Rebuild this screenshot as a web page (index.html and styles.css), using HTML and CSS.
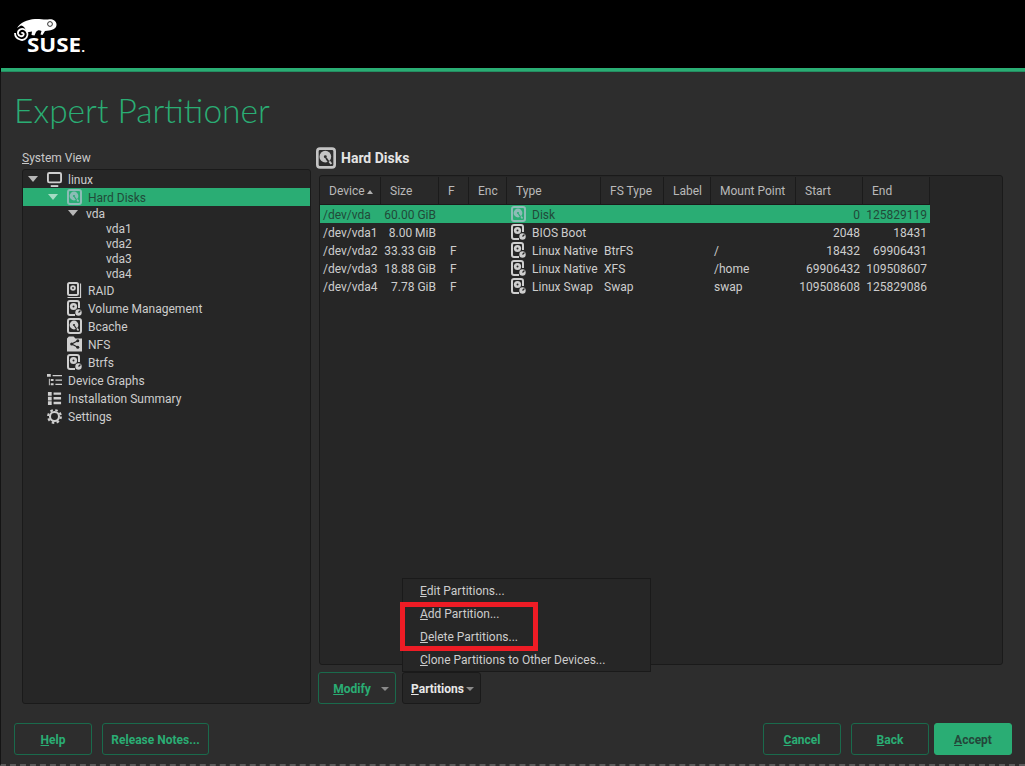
FILE: index.html
```html
<!DOCTYPE html>
<html lang="en">
<head>
    <meta charset="UTF-8">
    <meta name="viewport" content="width=device-width, initial-scale=1.0">
    <title>Expert Partitioner</title>
    <link rel="stylesheet" href="styles.css">
</head>
<body>
    <svg class="defs" width="0" height="0">
        <symbol id="i-monitor" viewBox="0 0 16 16">
            <rect x="1" y="1" width="14" height="10" rx="1.5" fill="none" stroke="currentColor" stroke-width="2"/>
            <rect x="4" y="14" width="8" height="2" fill="currentColor"/>
        </symbol>
        <symbol id="i-disk" viewBox="0 0 15 16">
            <rect x="1" y="1" width="13" height="14" rx="2" fill="none" stroke="currentColor" stroke-width="2"/>
            <circle cx="7" cy="7" r="4.400" fill="currentColor"/>
            <circle class="hole" cx="7" cy="7" r="1.100"/>
            <path class="cut" d="M7.500 8l3.500 5"/>
            <path d="M10 10.500l1.500 2" stroke="currentColor" stroke-width="1.500"/>
        </symbol>
        <symbol id="i-disk-sub" viewBox="0 0 15 16">
            <path d="M8 15H3a2 2 0 0 1-2-2V3a2 2 0 0 1 2-2h7a2 2 0 0 1 2 2v5" fill="none" stroke="currentColor" stroke-width="2"/>
            <circle cx="6.500" cy="6.500" r="3.600" fill="currentColor"/>
            <circle class="hole" cx="6.500" cy="6.500" r="1"/>
            <circle cx="11.500" cy="12.500" r="3.200" fill="currentColor"/>
            <path class="cut" d="M11.500 12.500l2-2"/>
        </symbol>
        <symbol id="i-raid" viewBox="0 0 15 16">
            <rect x="1" y="1" width="10" height="12" rx="1.500" fill="none" stroke="currentColor" stroke-width="2"/>
            <circle cx="6" cy="6" r="2.800" fill="currentColor"/>
            <circle class="hole" cx="6" cy="6" r=".9"/>
            <path d="M13.500 1.500v14h-13" fill="none" stroke="currentColor" stroke-width="1.200"/>
        </symbol>
        <symbol id="i-nfs" viewBox="0 0 16 16">
            <path d="M0 2L2 0h5l2 2h7v14H0z" fill="currentColor"/>
            <path class="cut" d="M11.500 4.500L5 8l6.500 3.500"/>
            <circle class="hole" cx="11.500" cy="4.500" r="1.600"/>
            <circle class="hole" cx="5" cy="8" r="1.600"/>
            <circle class="hole" cx="11.500" cy="11.500" r="1.600"/>
        </symbol>
        <symbol id="i-graphs" viewBox="0 0 16 14">
            <path d="M0 0h4v3H0zM6 1h10v1.500H6zM2 5h1v7H2zM4 5.500h3v2H4zM9 6h7v1.300H9zM4 10h3v2H4zM9 10.500h7v1.300H9z" fill="currentColor"/>
        </symbol>
        <symbol id="i-summary" viewBox="-1 -1 16 16">
            <path d="M0 0h4v4H0zM6 .5h8V3H6zM0 5h4v4H0zM6 5.500h8V8H6zM0 10h4v4H0zM6 10.500h8V13H6z" fill="currentColor"/>
        </symbol>
        <symbol id="i-gear" viewBox="0 0 16 16">
            <circle cx="8" cy="8" r="4.800" fill="none" stroke="currentColor" stroke-width="2.200"/>
            <circle cx="8" cy="8" r="6.800" fill="none" stroke="currentColor" stroke-width="2.200" stroke-dasharray="2.700 2.640"/>
        </symbol>
    </svg>

    <div class="page">
        <header class="top-bar">
            <svg class="logo" width="76" height="40" viewBox="0 0 76 40">
                <path d="M3 11C6 6 13 2.500 21 2c5-.3 9 1 13 .5 4-1 8 1 8.500 4.500.3 4-3 6-7.500 6.500l-4 .5-2.500 4-2-.5 1-3.500c-2-1-4-1-5.500 1l-1.500 3.500-3-.5.500-3.500-6 1c0-4-2-6.500-5-7z" fill="#fff"/>
                <path d="M7.500 16.500c1-1.500 3 0 2 1.500-1 2-5 1.500-5.500-1.500-.5-3.500 3.500-5.500 6.500-4 3 1.500 4 5 2 8-1.500 2-4 3-6.500 2-3-1-5-3.500-5-6.500" fill="none" stroke="#fff" stroke-width="1.800"/>
                <circle cx="36" cy="7" r="2.400" fill="none" stroke="#000" stroke-width=".8"/>
                <text class="logo-text" x="13" y="35" textLength="58" lengthAdjust="spacingAndGlyphs">SUSE<tspan class="logo-dot">.</tspan></text>
            </svg>
        </header>

        <h1 class="title">Expert Partitioner</h1>

        <main class="panes">
            <section class="left-pane">
                <div class="pane-label"><u>S</u>ystem View</div>
                <div class="tree">
                    <div class="row lvl-0"><span class="arrow"></span><svg class="ic ic-wide"><use href="#i-monitor"/></svg>linux</div>
                    <div class="row lvl-1 selected"><span class="arrow"></span><svg class="ic"><use href="#i-disk"/></svg>Hard Disks</div>
                    <div class="row thin lvl-2"><span class="arrow"></span>vda</div>
                    <div class="row thin lvl-3">vda1</div>
                    <div class="row thin lvl-3">vda2</div>
                    <div class="row thin lvl-3">vda3</div>
                    <div class="row thin lvl-3">vda4</div>
                    <div class="row lvl-1b"><svg class="ic"><use href="#i-raid"/></svg>RAID</div>
                    <div class="row lvl-1b"><svg class="ic"><use href="#i-disk-sub"/></svg>Volume Management</div>
                    <div class="row lvl-1b"><svg class="ic"><use href="#i-disk"/></svg>Bcache</div>
                    <div class="row lvl-1b"><svg class="ic"><use href="#i-nfs"/></svg>NFS</div>
                    <div class="row lvl-1b"><svg class="ic"><use href="#i-disk-sub"/></svg>Btrfs</div>
                    <div class="row lvl-0b"><svg class="ic ic-wide"><use href="#i-graphs"/></svg>Device Graphs</div>
                    <div class="row lvl-0b"><svg class="ic ic-wide"><use href="#i-summary"/></svg>Installation Summary</div>
                    <div class="row lvl-0b"><svg class="ic ic-wide"><use href="#i-gear"/></svg>Settings</div>
                </div>
            </section>

            <section class="right-pane">
                <h2 class="pane-title"><svg class="title-ic"><use href="#i-disk"/></svg>Hard Disks</h2>
                <div class="table-box">
                    <table class="devices">
                        <colgroup>
                            <col class="c-device"><col class="c-size"><col class="c-f"><col class="c-enc"><col class="c-type">
                            <col class="c-fs"><col class="c-label"><col class="c-mount"><col class="c-start"><col class="c-end">
                        </colgroup>
                        <thead>
                            <tr>
                                <th>Device<span class="sort"></span></th><th>Size</th><th>F</th><th>Enc</th><th>Type</th>
                                <th>FS Type</th><th>Label</th><th>Mount Point</th><th>Start</th><th>End</th>
                            </tr>
                        </thead>
                        <tbody>
                            <tr class="selected">
                                <td class="dev">/dev/vda</td><td class="num">60.00 GiB</td><td></td><td></td>
                                <td class="type"><svg class="ic"><use href="#i-disk"/></svg>Disk</td>
                                <td></td><td></td><td></td><td class="num">0</td><td class="num">125829119</td>
                            </tr>
                            <tr>
                                <td class="dev">/dev/vda1</td><td class="num">8.00 MiB</td><td></td><td></td>
                                <td class="type"><svg class="ic"><use href="#i-disk-sub"/></svg>BIOS Boot</td>
                                <td></td><td></td><td></td><td class="num">2048</td><td class="num">18431</td>
                            </tr>
                            <tr>
                                <td class="dev">/dev/vda2</td><td class="num">33.33 GiB</td><td class="flag">F</td><td></td>
                                <td class="type"><svg class="ic"><use href="#i-disk-sub"/></svg>Linux Native</td>
                                <td>BtrFS</td><td></td><td>/</td><td class="num">18432</td><td class="num">69906431</td>
                            </tr>
                            <tr>
                                <td class="dev">/dev/vda3</td><td class="num">18.88 GiB</td><td class="flag">F</td><td></td>
                                <td class="type"><svg class="ic"><use href="#i-disk-sub"/></svg>Linux Native</td>
                                <td>XFS</td><td></td><td>/home</td><td class="num">69906432</td><td class="num">109508607</td>
                            </tr>
                            <tr>
                                <td class="dev">/dev/vda4</td><td class="num">7.78 GiB</td><td class="flag">F</td><td></td>
                                <td class="type"><svg class="ic"><use href="#i-disk-sub"/></svg>Linux Swap</td>
                                <td>Swap</td><td></td><td>swap</td><td class="num">109508608</td><td class="num">125829086</td>
                            </tr>
                        </tbody>
                    </table>
                </div>

                <div class="pane-buttons">
                    <button class="btn btn-menu"><span><u>M</u>odify</span><span class="caret"></span></button>
                    <div class="menu-wrap">
                        <ul class="menu">
                            <li><u>E</u>dit Partitions...</li>
                            <li><u>A</u>dd Partition...</li>
                            <li><u>D</u>elete Partitions...</li>
                            <li><u>C</u>lone Partitions to Other Devices...</li>
                        </ul>
                        <div class="highlight"></div>
                        <button class="btn btn-open"><span><u>P</u>artitions</span><span class="caret"></span></button>
                    </div>
                </div>
            </section>
        </main>

        <footer class="bottom-bar">
            <button class="btn"><u>H</u>elp</button>
            <button class="btn btn-notes">Re<u>l</u>ease Notes...</button>
            <button class="btn push"><u>C</u>ancel</button>
            <button class="btn"><u>B</u>ack</button>
            <button class="btn btn-primary"><u>A</u>ccept</button>
        </footer>
    </div>
</body>
</html>
```

FILE: styles.css
```css
* {
    box-sizing: border-box;
}

html, body {
    margin: 0;
    padding: 0;
    background-color: #2d2d2d;
}

body {
    font-family: Roboto, Arial, sans-serif;
    font-size: 12px;
    color: #cdcdcd;
    overflow: hidden;
    --hole: #262626;
}

.defs {
    position: absolute;
}

.hole {
    fill: var(--hole);
}

.cut {
    fill: none;
    stroke: var(--hole);
    stroke-width: 1.300;
}

.page {
    width: 1025px;
    height: 766px;
    display: flex;
    flex-direction: column;
    border-left: 1px solid #141414;
    border-bottom: 2px dashed #5c5c5c;
}

.top-bar {
    height: 72px;
    margin-left: -1px;
    padding: 17px 0 0 14px;
    background: #000;
    position: relative;
}

.top-bar::after {
    content: "";
    position: absolute;
    left: 1px;
    right: 0;
    bottom: 0;
    height: 4px;
    background: linear-gradient(#2aad74, #2aad74 75%, #1e6f50);
}

.logo-text {
    font-family: "Open Sans", sans-serif;
    font-size: 20px;
    font-weight: 700;
    fill: #fff;
}

.logo-dot {
    font-size: 12px;
}

.title {
    margin: 17px 0 0 13px;
    height: 42px;
    font-family: Lato, sans-serif;
    font-size: 33.500px;
    line-height: 42px;
    font-weight: 300;
    color: #2aad74;
}

.panes {
    display: grid;
    grid-template-columns: 289px 687px;
    column-gap: 5px;
    margin: 16px 0 0 21px;
    height: 557px;
}

.left-pane {
    display: flex;
    flex-direction: column;
    padding-top: 3px;
}

.pane-label {
    height: 19px;
    padding-top: 1px;
    line-height: 15px;
    color: #c8c8c8;
}

.tree {
    flex: 1;
    background: #262626;
    border: 1px solid #1a1a1a;
    border-radius: 3px;
}

.row {
    display: flex;
    align-items: center;
    height: 18px;
    padding-top: 1px;
}

.row.thin {
    height: 15px;
    padding-top: 0;
}

.row.selected,
.devices tr.selected td {
    background: #2aad74;
    color: #214a39;
    --hole: #2aad74;
}

.lvl-0 { padding-left: 5px; }
.lvl-0b { padding-left: 24px; }
.lvl-1 { padding-left: 25px; }
.lvl-1b { padding-left: 44px; }
.lvl-2 { padding-left: 45px; }
.lvl-3 { padding-left: 83px; }

.arrow {
    width: 0;
    height: 0;
    margin: -2px 9px 0 0;
    border-left: 5px solid transparent;
    border-right: 5px solid transparent;
    border-top: 6px solid #b8b8b8;
}

.lvl-2 .arrow {
    margin-right: 8px;
}

.selected .arrow {
    border-top-color: #a5dcc4;
}

.ic {
    width: 15px;
    height: 16px;
    margin: -1px 6px 0 0;
    flex: none;
    color: #cfcfcf;
}

.ic-wide {
    width: 15px;
    height: 15px;
}

.selected .ic {
    color: #8cbcb6;
}

.right-pane {
    display: flex;
    flex-direction: column;
}

.pane-title {
    display: flex;
    align-items: center;
    height: 22px;
    margin: 0;
    font-size: 14px;
    font-weight: 700;
    color: #e4e4e4;
    --hole: #2d2d2d;
}

.title-ic {
    width: 20px;
    height: 22px;
    margin-right: 5px;
    color: #c4c4c4;
}

.table-box {
    height: 490px;
    margin: 6px 0 0 3px;
    width: 684px;
    background: #262626;
    border: 1px solid #1a1a1a;
    border-radius: 3px;
    padding-top: 1px;
}

.devices {
    width: 610px;
    table-layout: fixed;
    border-collapse: separate;
    border-spacing: 0;
}

.c-device { width: 61px; }
.c-size { width: 58px; }
.c-f { width: 30px; }
.c-enc { width: 38px; }
.c-type { width: 94px; }
.c-fs { width: 63px; }
.c-label { width: 47px; }
.c-mount { width: 85px; }
.c-start { width: 67px; }
.c-end { width: 67px; }

.devices th {
    height: 28px;
    padding: 0 0 0 9px;
    font-weight: 400;
    text-align: left;
    color: #b9b9b9;
    background: #292929;
    border-right: 1px solid #1b1b1b;
    border-bottom: 1px solid #1b1b1b;
}

.devices td {
    height: 18px;
    padding: 2px 0 0 3px;
    line-height: 16px;
    vertical-align: top;
    white-space: nowrap;
    color: #cdcdcd;
}

.devices td.num {
    padding: 2px 3px 0 0;
    text-align: right;
}

.devices td.flag {
    padding-left: 11px;
}

.devices td.type {
    padding-left: 4px;
}

.devices td.type .ic {
    vertical-align: top;
    margin: -1px 6px 0 0;
}

.sort {
    display: inline-block;
    margin: 0 0 1px 2px;
    border-left: 3.500px solid transparent;
    border-right: 3.500px solid transparent;
    border-bottom: 4px solid #b0b0b0;
}

.pane-buttons {
    display: flex;
    gap: 6px;
    margin: 7px 0 0 2px;
}

.menu-wrap {
    position: relative;
}

.menu {
    position: absolute;
    left: 0;
    bottom: 32px;
    width: 249px;
    height: 94px;
    margin: 0;
    padding: 1px 0 0 17px;
    list-style: none;
    background: #262626;
    border: 1px solid #1a1a1a;
    z-index: 1;
}

.menu li {
    height: 23px;
    line-height: 23px;
    white-space: nowrap;
}

.highlight {
    position: absolute;
    left: -2px;
    top: -70px;
    width: 138px;
    height: 49px;
    border: 5px solid #ee1c25;
    z-index: 2;
}

.btn {
    width: 78px;
    height: 32px;
    padding: 1px 0 0;
    font-family: Roboto, Arial, sans-serif;
    font-size: 12px;
    font-weight: 700;
    color: #2aad74;
    background: #2d2d2d;
    border: 1px solid #1a6a4c;
    border-radius: 3px;
}

.btn-menu,
.btn-open {
    display: flex;
    align-items: center;
    justify-content: center;
}

.btn-menu {
    padding-left: 8px;
}

.btn-menu .caret {
    margin-left: 10px;
}

.btn-open {
    width: 79px;
    padding-left: 2px;
    color: #e8e8e8;
    background: #262626;
    border-color: #1a1a1a;
}

.btn-open .caret {
    margin-left: 2px;
}

.caret {
    width: 0;
    height: 0;
    border-left: 4.500px solid transparent;
    border-right: 4.500px solid transparent;
    border-top: 4px solid #8a8a8a;
}

.bottom-bar {
    display: flex;
    gap: 10px;
    margin: 19px 0 0 13px;
    width: 998px;
}

.btn-notes {
    width: 107px;
}

.push {
    margin-left: auto;
}

.btn-primary {
    margin-left: -5px;
    color: #24473a;
    background: #2aad74;
    border-color: #2aad74;
}
```
